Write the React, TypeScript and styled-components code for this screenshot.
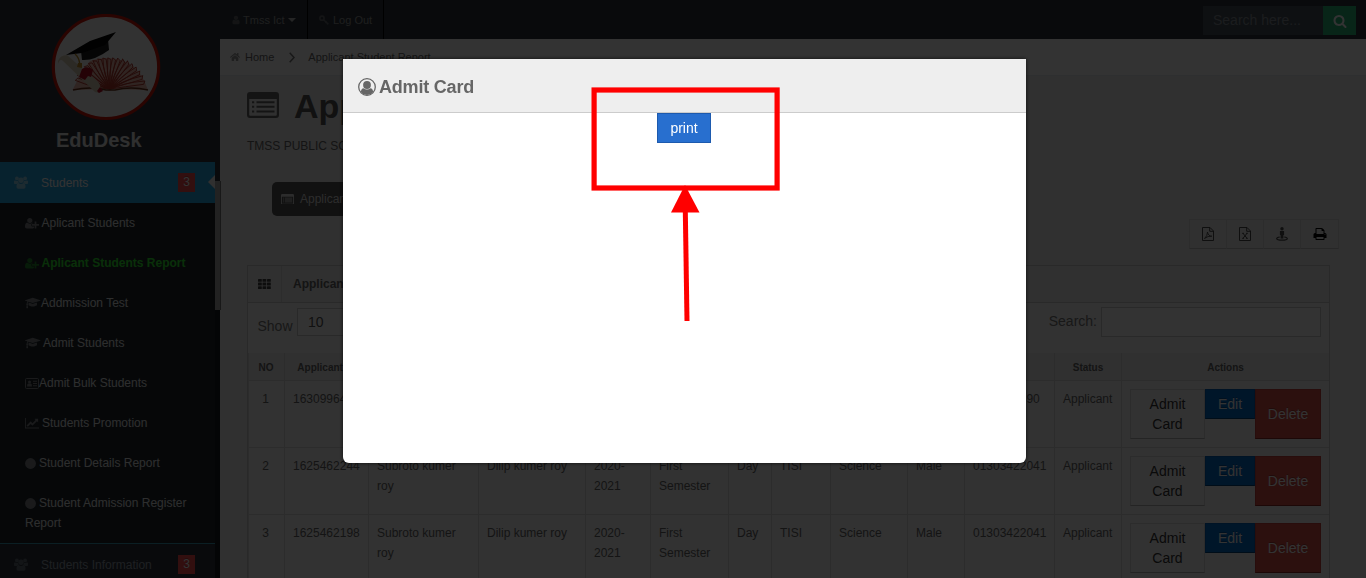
import React from 'react';
import styled, { createGlobalStyle } from 'styled-components';
import { FaHome } from 'react-icons/fa';

const Global = createGlobalStyle`
  * { box-sizing: border-box; }
  html, body { margin: 0; height: 578px; overflow: hidden; }
  body { font: 12px/20px "Liberation Sans", Arial, sans-serif; color: #666; background: #2e363f; }
  svg { display: block; flex: none; }
`;

const Page = styled.div`
  display: flex;
  width: 1366px;
  height: 578px;
  overflow: hidden;
`;

/* Sidebar */
const Sidebar = styled.aside`
  display: flex;
  flex: none;
  width: 220px;
  background: #2e363f;
`;
const SideMain = styled.div`
  width: 215px;
  height: 578px;
  overflow: hidden;
`;
const Brand = styled.div`
  height: 162px;
  padding: 14px 0 0 51px;
`;
const BrandName = styled.div`
  margin: 6px 0 0 5px;
  font-size: 20px;
  line-height: 24px;
  font-weight: bold;
  color: #e8e8e8;
`;
const MenuRow = styled.div<{ $active?: boolean }>`
  position: relative;
  display: flex;
  align-items: center;
  height: ${p => (p.$active ? 41 : 42)}px;
  padding: 0 20px 0 14px;
  background: ${p => (p.$active ? '#27a9e3' : '#2e363f')};
  color: ${p => (p.$active ? '#fff' : '#939da8')};
  border-top: ${p => (p.$active ? '0' : '1px solid #3a9db4')};
`;
const MenuIcon = styled.span`
  width: 27px;
  opacity: 0.5;
`;
const MenuText = styled.span`
  flex: 1;
`;
const Badge = styled.span`
  width: 17px;
  height: 19px;
  line-height: 19px;
  text-align: center;
  color: #fff;
  background: #f74d4d;
  text-shadow: 0 -1px 0 rgba(0, 0, 0, 0.25);
`;
const Notch = styled.i`
  position: absolute;
  right: 0;
  top: 13px;
  border: 7px solid transparent;
  border-left: 0;
  border-right-color: #eee;
`;
const SubMenu = styled.div`
  background: #1e242b;
`;
const SubItem = styled.div<{ $on?: boolean }>`
  padding: 10px 20px 10px 25px;
  font-weight: ${p => (p.$on ? 'bold' : 'normal')};
  color: ${p => (p.$on ? '#2fe82f' : '#e2e4e6')};
`;
const SubIcon = styled.span<{ $w: number }>`
  display: inline-block;
  width: ${p => p.$w}px;
  opacity: 0.5;
  svg { display: inline-block; vertical-align: -2px; }
`;
const ScrollTrack = styled.div`
  width: 5px;
  padding-top: 181px;
  background: linear-gradient(#2e363f 181px, #171a1e 181px);
`;
const ScrollThumb = styled.div`
  position: relative;
  width: 6px;
  height: 129px;
  background: #a8a8a8;
  border-right: 1px solid #777;
`;

/* Main column */
const Main = styled.main`
  flex: 1;
  min-width: 0;
  background: #eee;
`;
const TopBar = styled.div`
  display: flex;
  height: 39px;
  padding-right: 10px;
  background: #2e363f;
`;
const TopLink = styled.div<{ $w: number; $pad: number; $gap: number }>`
  display: flex;
  align-items: center;
  gap: ${p => p.$gap}px;
  width: ${p => p.$w}px;
  padding-left: ${p => p.$pad}px;
  font-size: 11px;
  color: #999;
  border-right: 1px solid #000;
  svg { opacity: 0.5; }
`;
const Caret = styled.i`
  margin-left: 1px;
  border: 4px solid transparent;
  border-top-color: #bbb;
  border-bottom: 0;
`;
const TopSearch = styled.div`
  display: flex;
  margin: 6px 0 0 auto;
  height: 29px;
`;
const TopInput = styled.div`
  width: 120px;
  padding-left: 10px;
  line-height: 29px;
  font-size: 14px;
  color: #868e96;
  background: #47515b;
`;
const TopButton = styled.div`
  display: grid;
  place-items: center;
  width: 33px;
  color: #fff;
  background: #28b779;
`;
const Crumbs = styled.div`
  display: flex;
  align-items: center;
  height: 37px;
  padding-left: 10px;
  font-size: 11px;
  background: #fff;
  border-bottom: 1px solid #e3ebed;
`;
const HomeMark = styled.span`
  width: 15px;
  color: #999;
`;
const CrumbSep = styled.span`
  width: 34px;
  padding-left: 15px;
`;
const Heading = styled.div`
  display: flex;
  align-items: center;
  gap: 15px;
  height: 60px;
  padding-left: 27px;
`;
const HeadingIcon = styled.span`
  margin-top: -3px;
`;
const HeadingText = styled.h1`
  margin: 0;
  font-size: 34px;
  line-height: 40px;
  color: #555;
  white-space: nowrap;
`;
const School = styled.div`
  height: 46px;
  padding-left: 27px;
`;
const TabButton = styled.div`
  display: flex;
  align-items: center;
  gap: 6px;
  width: 170px;
  height: 34px;
  margin-left: 52px;
  padding-left: 9px;
  border-radius: 5px;
  color: #ddd;
  background: #555;
`;
const ExportRow = styled.div`
  display: flex;
  justify-content: flex-end;
  padding: 3px 27px 0 0;
  height: 49px;
`;
const ExportButton = styled.div<{ $dark?: boolean }>`
  display: grid;
  place-items: center;
  width: ${p => (p.$dark ? 39 : 38)}px;
  height: 30px;
  margin-left: -1px;
  color: ${p => (p.$dark ? '#000' : '#4a4a4a')};
  background: #f0f0f0;
  border: 1px solid #ddd;
  border-bottom-color: #c4c4c4;
`;
const Widget = styled.section`
  width: 1083px;
  height: 330px;
  margin-left: 27px;
  background: #f9f9f9;
  border: 1px solid #cdcdcd;
`;
const WidgetHead = styled.div`
  display: flex;
  height: 37px;
  background: #efefef;
  border-bottom: 1px solid #cdcdcd;
`;
const WidgetIcon = styled.div`
  display: grid;
  place-items: center;
  width: 34px;
  color: #444;
  border-right: 1px solid #ddd;
`;
const WidgetTitle = styled.div`
  padding-left: 11px;
  line-height: 37px;
  font-weight: bold;
`;
const Controls = styled.div`
  display: flex;
  justify-content: space-between;
  height: 50px;
  padding: 4px 8px 0 9.500px;
  font-size: 14px;
  color: #777;
`;
const ShowGroup = styled.div`
  display: flex;
  gap: 4.500px;
  line-height: 38px;
`;
const LengthSelect = styled.div`
  width: 220px;
  height: 28px;
  margin-top: 1px;
  padding-left: 10px;
  line-height: 26px;
  color: #555;
  background: #fff;
  border: 1px solid #ccc;
`;
const FilterGroup = styled.div`
  display: flex;
  gap: 4px;
  line-height: 28px;
`;
const FilterInput = styled.div`
  width: 220px;
  height: 30px;
  background: #fff;
  border: 1px solid #ccc;
`;
const Row = styled.div<{ $head?: boolean }>`
  display: grid;
  grid-template-columns: 36px 84px 110px 107px 65px 78px 43px 59px 77px 57px 90px 67px 1fr;
  height: ${p => (p.$head ? 27 : 67)}px;
  border-top: ${p => (p.$head ? '0' : '1px solid #ddd')};
  background: ${p => (p.$head ? '#efefef' : '#f9f9f9')};
`;
const HeadCell = styled.div`
  border-left: 1px solid #ddd;
  text-align: center;
  font-size: 10px;
  font-weight: bold;
  line-height: 30px;
  white-space: nowrap;
  &:first-child { padding-right: 1px; }
`;
const Cell = styled.div<{ $center?: boolean }>`
  padding: ${p => (p.$center ? '8px 8px 8px 6px' : '8px 6px 8px 8px')};
  border-left: 1px solid #ddd;
  text-align: ${p => (p.$center ? 'center' : 'left')};
`;
const Actions = styled.div`
  display: flex;
  align-items: flex-start;
  padding: 8px;
  border-left: 1px solid #ddd;
  font-size: 14px;
`;
const ActionButton = styled.div<{ $kind: 'plain' | 'blue' | 'red' }>`
  width: ${p => ({ plain: 75, blue: 50, red: 66 }[p.$kind])}px;
  height: ${p => (p.$kind === 'blue' ? 30 : 50)}px;
  padding: ${p => (p.$kind === 'red' ? '14px 0' : p.$kind === 'plain' ? '4px 12px' : '4px 0')};
  text-align: center;
  color: ${p => (p.$kind === 'plain' ? '#333' : '#fff')};
  background: ${p => ({ plain: '#f9f9f9', blue: '#006dcc', red: '#da4f49' }[p.$kind])};
  border: 1px solid ${p => ({ plain: '#ddd', blue: '#0061b8', red: '#c8423c' }[p.$kind])};
  border-bottom-color: ${p => ({ plain: '#b3b3b3', blue: '#00407a', red: '#8a2a25' }[p.$kind])};
  text-shadow: ${p => (p.$kind === 'plain' ? '0 1px 1px rgba(255,255,255,.75)' : '0 -1px 0 rgba(0,0,0,.25)')};
`;

/* Dialog */
const Backdrop = styled.div`
  position: fixed;
  inset: 0;
  display: flex;
  align-items: flex-start;
  padding: 59px 0 0 343px;
  background: rgba(0, 0, 0, 0.8);
`;
const Dialog = styled.div`
  width: 683px;
  height: 404px;
  overflow: hidden;
  background: #fff;
  border-radius: 0 0 6px 6px;
  box-shadow: 0 0 4px rgba(0, 0, 0, 0.7);
`;
const DialogHead = styled.div`
  display: flex;
  align-items: center;
  gap: 3px;
  height: 54px;
  padding: 2px 0 0 15px;
  font-size: 18px;
  font-weight: bold;
  letter-spacing: -0.2px;
  color: #666;
  background: #eee;
  border-bottom: 1px solid #ccc;
`;
const PrintButton = styled.button`
  display: block;
  width: 54px;
  height: 30px;
  margin: 0 0 0 314px;
  padding: 0;
  font: 14px/20px "Liberation Sans", Arial, sans-serif;
  color: #fff;
  background: #286fcf;
  border: 1px solid #1d5aae;
`;
const Marker = styled.svg`
  position: fixed;
  left: 585px;
  top: 80px;
`;

/* Icons */
type GlyphProps = { d: string; box: number; w: number; h?: number };
const Glyph = ({ d, box, w, h }: GlyphProps) => (
  <svg width={w} height={h ?? (w * 1792) / box} viewBox={`0 0 ${box} 1792`} fill="currentColor"><path d={d} /></svg>
);
const paths = {
  userPlus: 'M704 896q-159 0-271.5-112.5t-112.5-271.5 112.5-271.5 271.5-112.5 271.5 112.5 112.5 271.5-112.5 271.5-271.5 112.5zm960 128h352q13 0 22.5 9.5t9.5 22.5v192q0 13-9.5 22.5t-22.5 9.5h-352v352q0 13-9.5 22.5t-22.5 9.5h-192q-13 0-22.5-9.5t-9.5-22.5v-352h-352q-13 0-22.5-9.5t-9.5-22.5v-192q0-13 9.5-22.5t22.5-9.5h352v-352q0-13 9.5-22.5t22.5-9.5h192q13 0 22.5 9.5t9.5 22.5v352zm-736 224q0 52 38 90t90 38h256v238q-68 50-171 50h-874q-121 0-194-69t-73-190q0-53 3.5-103.5t14-109 26.5-108.5 43-97.5 62-81 85.5-53.5 111.5-20q19 0 39 17 79 61 154.5 91.5t164.5 30.5 164.5-30.5 154.5-91.5q20-17 39-17 132 0 217 96h-223q-52 0-90 38t-38 90v192z',
  user: 'M1536 1399q0 109-62.5 187t-150.5 78h-854q-88 0-150.5-78t-62.5-187q0-85 8.5-160.5t31.5-152 58.5-131 94-89 134.5-34.5q131 128 313 128t313-128q76 0 134.5 34.5t94 89 58.5 131 31.5 152 8.5 160.5zm-256-887q0 159-112.5 271.5t-271.5 112.5-271.5-112.5-112.5-271.5 112.5-271.5 271.5-112.5 271.5 112.5 112.5 271.5z',
  cap: 'M1774 836l18 316q4 69-82 128t-235 93.5-323 34.5-323-34.5-235-93.5-82-128l18-316 574 181q22 7 48 7t48-7zm530-324q0 23-22 31l-1120 352q-4 1-10 1t-10-1l-652-206q-43 34-71 111.5t-34 178.5q63 36 63 109 0 69-58 107l58 433q2 14-8 25-9 11-24 11h-192q-15 0-24-11-10-11-8-25l58-433q-58-38-58-107 0-73 65-111 11-207 98-330l-333-104q-22-8-22-31t22-31l1120-352q4-1 10-1t10 1l1120 352q22 8 22 31z',
  chart: 'M2048 1536v128h-2048v-1536h128v1408h1920zm-128-1248v435q0 21-19.5 29.5t-35.5-7.5l-121-121-633 633q-10 10-23 10t-23-10l-233-233-416 416-192-192 585-585q10-10 23-10t23 10l233 233 464-464-121-121q-16-16-7.5-35.5t29.5-19.5h435q14 0 23 9t9 23z',
  search: 'M1216 832q0-185-131.5-316.5t-316.5-131.5-316.5 131.5-131.5 316.5 131.5 316.5 316.5 131.5 316.5-131.5 131.5-316.5zm512 832q0 52-38 90t-90 38q-54 0-90-38l-343-342q-179 124-399 124-143 0-273.5-55.5t-225-150-150-225-55.5-273.5 55.5-273.5 150-225 225-150 273.5-55.5 273.5 55.5 225 150 150 225 55.5 273.5q0 220-124 399l343 343q37 37 37 90z',
  print: 'M448 1536h896v-256h-896v256zm0-640h896v-384h-160q-40 0-68-28t-28-68v-160h-640v640zm1152 64q0-26-19-45t-45-19-45 19-19 45 19 45 45 19 45-19 19-45zm128 0v416q0 13-9.5 22.5t-22.5 9.5h-224v160q0 40-28 68t-68 28h-960q-40 0-68-28t-28-68v-160h-224q-13 0-22.5-9.5t-9.5-22.5v-416q0-79 56.5-135.5t135.500-56.500h64v-544q0-40 28-68t68-28h672q40 0 88 20t76 48l152 152q28 28 48 76t20 88v256h64q79 0 135.5 56.5t56.5 135.5z',
};
const ListAlt = ({ w }: { w: number }) => (
  <svg width={w} height={(w * 26) / 32} viewBox="0 0 32 26" fill="currentColor">
    <path fillRule="evenodd" d="M3 0 H29 Q32 0 32 3 V23 Q32 26 29 26 H3 Q0 26 0 23 V3 Q0 0 3 0 Z M2.200 7 V22.800 Q2.200 23.800 3.200 23.800 H28.800 Q29.800 23.800 29.800 22.800 V7 Z" />
    <path d="M5 9.200h2.200v2H5z M5 13.800h2.200v2H5z M5 18.400h2.200v2H5z M9.500 9.200h18v2h-18z M9.500 13.800h18v2h-18z M9.500 18.400h18v2h-18z" />
  </svg>
);
const Group = () => (
  <svg width="14" height="13" viewBox="0 0 14 13" fill="currentColor">
    <circle cx="2.900" cy="2.400" r="1.900" />
    <circle cx="11.100" cy="2.400" r="1.900" />
    <circle cx="7" cy="4.300" r="2.700" />
    <path d="M0 7.500 V5.500 Q0 4.500 1 4.600 Q2.800 5.300 3.900 4.800 Q4 6.300 4.900 7 Q3.500 7 3 7.900 H1 Q0 8 0 7 Z M14 7.500 V5.500 Q14 4.500 13 4.600 Q11.200 5.300 10.100 4.800 Q10 6.300 9.100 7 Q10.500 7 11 7.900 H13 Q14 8 14 7 Z" />
    <path d="M2.500 11 Q2.500 7.200 4.500 7.100 Q7 8.800 9.500 7.100 Q11.500 7.200 11.500 11 Q11.500 12.800 9.800 12.800 H4.200 Q2.500 12.800 2.500 11 Z" />
  </svg>
);
const IdCard = () => (
  <svg width="14" height="11" viewBox="0 0 14 11" fill="currentColor">
    <rect x=".5" y=".5" width="13" height="10" rx="1" fill="none" stroke="currentColor" />
    <circle cx="4.500" cy="4" r="1.500" />
    <path d="M2 8.500 Q2 5.700 3.300 5.500 H5.700 Q7 5.700 7 8.500 Z M8 2.700h4v1H8z M8 5h4v1H8z M8 7.300h4v1H8z" />
  </svg>
);
const Dot = () => (
  <svg width="11" height="11" viewBox="0 0 11 11"><circle cx="5.500" cy="5.500" r="5.400" fill="currentColor" /></svg>
);
const KeyIcon = () => (
  <svg width="10" height="10" viewBox="0 0 10 10" fill="none" stroke="currentColor" strokeWidth="1.600">
    <circle cx="3" cy="3.200" r="2.100" />
    <path d="M4.600 4.700 L9.300 9.300 M6.300 7.700 L7.600 6.300 M8 9.300 L9.300 7.900" strokeWidth="1.400" />
  </svg>
);
const Chevron = () => (
  <svg width="6" height="11" viewBox="0 0 6 11"><path d="M.7 .8 L5 5.500 L.7 10.200" fill="none" stroke="#777" strokeWidth="1.500" /></svg>
);
const Grid3 = () => (
  <svg width="13" height="10" viewBox="0 0 13 10" fill="currentColor">
    {[0, 3.6, 7.2].map(y => [0, 4.5, 9].map(x => <rect key={`${x}-${y}`} x={x} y={y} width="3.800" height="2.800" rx=".5" />))}
  </svg>
);
const FileIcon = ({ kind }: { kind: 'pdf' | 'xls' }) => (
  <svg width="12" height="14" viewBox="0 0 12 14" fill="none" stroke="currentColor">
    <path d="M.5 .5 H8 L11.500 4 V13.500 H.5 Z M7.700 .5 V4.300 H11.500" />
    {kind === 'pdf'
      ? <path d="M2.500 11.500 Q5.500 9 5.500 5 Q6.300 9.200 9.800 9.200 Q6 8.700 2.500 11.500" strokeWidth=".9" />
      : <path d="M4 6.300 L8 11.300 M8 6.300 L4 11.300 M3.200 6.300 h1.800 M7 6.300 h1.800 M3.200 11.300 h1.800 M7 11.300 h1.800" strokeWidth="1" />}
  </svg>
);
const StreetView = () => (
  <svg width="12" height="14" viewBox="0 0 12 14" fill="currentColor">
    <circle cx="6" cy="1.700" r="1.700" />
    <path d="M3.900 4 H8.100 V8 H7.400 V11.500 H4.600 V8 H3.900 Z" />
    <path d="M3.800 10 Q.7 10.500 .7 11.600 Q1 13.200 6 13.200 Q11 13.200 11.300 11.600 Q11.300 10.500 8.200 10" fill="none" stroke="currentColor" strokeWidth="1.200" />
  </svg>
);
const PersonCircle = () => (
  <svg width="18" height="18" viewBox="0 0 18 18">
    <circle cx="9" cy="9" r="8.300" fill="none" stroke="#666" strokeWidth="1.300" />
    <circle cx="9" cy="7" r="3.900" fill="#666" />
    <path d="M2.800 14 Q3.200 10.400 5.600 10.200 Q9 13 12.400 10.200 Q14.800 10.400 15.200 14 Q12.700 17 9 17 Q5.300 17 2.800 14 Z" fill="#666" />
  </svg>
);

function Logo() {
  const pages = [-76, -67, -58, -49, -40, -31, -22, -13, -4, 5, 14, 23, 32, 41, 50, 59, 68, 77];
  return (
    <svg width="110" height="108" viewBox="0 0 110 108">
      <ellipse cx="55" cy="53" rx="52.700" ry="51.500" fill="#fafafa" stroke="#d01408" strokeWidth="3.200" />
      <path d="M21.500 76 L28 63 L39 47 Q58 40 77 49 Q91 57 97 76 L63 75 L58 77 L55 75 Z" fill="#e58a78" opacity=".6" />
      <g fill="none" stroke="#b3372b" strokeWidth=".9">
        {pages.map(a => (
          <path key={a} d={`M0 0 Q-3 -15 0 ${-31 - Math.abs(a) / 16} l3 2 Q1 -14 0 0`} transform={`translate(59 75) rotate(${a})`} />
        ))}
      </g>
      <path d="M22 76 Q40 72 55 76 H64 Q80 72 97 76" fill="none" stroke="#6b331c" strokeWidth="1.500" />
      <path d="M7 47 Q9 41 16 41 L48 69 Q51 75 48 79 L44 78 L12 47 Q9 44 7 50 Z" fill="#ddd2b8" />
      <path d="M30 37 L31 46 Q43 47 58 36 L57 25 Z" fill="#1b1b1b" />
      <path d="M15 41 L39 27 L65 18 L54 31 L31 39 Z" fill="#050505" />
      <path d="M24 40 Q28 43 29 51" fill="none" stroke="#b98a24" strokeWidth="1.500" />
      <path d="M27 49 l4 0 l0 5 l-5 -1 Z" fill="#c28d24" />
      <path d="M31 55 Q36 51 42 56 L40 63 L37 62 L34 66 L28 63 Z M49 73 L52 77 L48 79 L46 77 Z" fill="#b30d22" />
    </svg>
  );
}

const plus = <Glyph d={paths.userPlus} box={2048} w={14} />;
const cap = <Glyph d={paths.cap} box={2304} w={15.5} />;
const subItems = [
  { icon: plus, w: 16.5, text: 'Aplicant Students' },
  { icon: plus, w: 16.5, text: 'Aplicant Students Report', on: true },
  { icon: cap, w: 16, text: 'Addmission Test' },
  { icon: cap, w: 18, text: 'Admit Students' },
  { icon: <IdCard />, w: 14, text: 'Admit Bulk Students' },
  { icon: <Glyph d={paths.chart} box={2048} w={14} />, w: 17, text: 'Students Promotion' },
  { icon: <Dot />, w: 14, text: 'Student Details Report' },
  { icon: <Dot />, w: 14, text: 'Student Admission Register Report' },
];

const columns = ['NO', 'Applicant ID', 'Name', 'Father Name', 'Session', 'Class', 'Shift', 'Section', 'Group', 'Gender', 'Mobile', 'Status', 'Actions'];
const rest = ['Subroto kumer roy', 'Dilip kumer roy', '2020-2021', 'First Semester', 'Day', 'TISI', 'Science', 'Male'];
const rows = [
  ['1', '1630996490', ...rest, '1309902390', 'Applicant'],
  ['2', '1625462244', ...rest, '01303422041', 'Applicant'],
  ['3', '1625462198', ...rest, '01303422041', 'Applicant'],
];

export default function App() {
  return (
    <>
      <Global />
      <Page>
        <Sidebar>
          <SideMain>
            <Brand>
              <Logo />
              <BrandName>EduDesk</BrandName>
            </Brand>
            <MenuRow $active>
              <MenuIcon><Group /></MenuIcon>
              <MenuText>Students</MenuText>
              <Badge>3</Badge>
              <Notch />
            </MenuRow>
            <SubMenu>
              {subItems.map(s => (
                <SubItem key={s.text} $on={s.on}>
                  <SubIcon $w={s.w}>{s.icon}</SubIcon>{s.text}
                </SubItem>
              ))}
            </SubMenu>
            <MenuRow>
              <MenuIcon><Group /></MenuIcon>
              <MenuText>Students Information</MenuText>
              <Badge>3</Badge>
            </MenuRow>
          </SideMain>
          <ScrollTrack><ScrollThumb /></ScrollTrack>
        </Sidebar>
        <Main>
          <TopBar>
            <TopLink $w={88} $pad={11} $gap={2}><Glyph d={paths.user} box={1792} w={10} />Tmss Ict<Caret /></TopLink>
            <TopLink $w={76} $pad={11} $gap={4}><KeyIcon />Log Out</TopLink>
            <TopSearch>
              <TopInput>Search here...</TopInput>
              <TopButton><Glyph d={paths.search} box={1792} w={14} /></TopButton>
            </TopSearch>
          </TopBar>
          <Crumbs>
            <HomeMark><FaHome size={10} /></HomeMark>
            Home
            <CrumbSep><Chevron /></CrumbSep>
            Applicant Student Report
          </Crumbs>
          <Heading>
            <HeadingIcon><ListAlt w={32} /></HeadingIcon>
            <HeadingText>Applicant Student Report</HeadingText>
          </Heading>
          <School>TMSS PUBLIC SCHOOL</School>
          <TabButton><ListAlt w={13} />Applicant Student List</TabButton>
          <ExportRow>
            <ExportButton><FileIcon kind="pdf" /></ExportButton>
            <ExportButton><FileIcon kind="xls" /></ExportButton>
            <ExportButton><StreetView /></ExportButton>
            <ExportButton $dark><Glyph d={paths.print} box={1792} w={14} /></ExportButton>
          </ExportRow>
          <Widget>
            <WidgetHead>
              <WidgetIcon><Grid3 /></WidgetIcon>
              <WidgetTitle>Applicant Student Report</WidgetTitle>
            </WidgetHead>
            <Controls>
              <ShowGroup>Show<LengthSelect>10</LengthSelect></ShowGroup>
              <FilterGroup>Search:<FilterInput /></FilterGroup>
            </Controls>
            <Row $head>
              {columns.map(c => <HeadCell key={c}>{c}</HeadCell>)}
            </Row>
            {rows.map(r => (
              <Row key={r[0]}>
                {r.map((v, i) => <Cell key={i} $center={i === 0}>{v}</Cell>)}
                <Actions>
                  <ActionButton $kind="plain">Admit Card</ActionButton>
                  <ActionButton $kind="blue">Edit</ActionButton>
                  <ActionButton $kind="red">Delete</ActionButton>
                </Actions>
              </Row>
            ))}
          </Widget>
        </Main>
      </Page>
      <Backdrop>
        <Dialog>
          <DialogHead><PersonCircle />Admit Card</DialogHead>
          <PrintButton>print</PrintButton>
        </Dialog>
      </Backdrop>
      <Marker width="200" height="250" viewBox="585 80 200 250">
        <rect x="594.100" y="90" width="183" height="98" fill="none" stroke="#f00" strokeWidth="5.200" />
        <path d="M685 185 L699.500 212.500 H671 Z" fill="#f00" />
        <path d="M685.300 210 L687 321" stroke="#f00" strokeWidth="5" />
      </Marker>
    </>
  );
}
